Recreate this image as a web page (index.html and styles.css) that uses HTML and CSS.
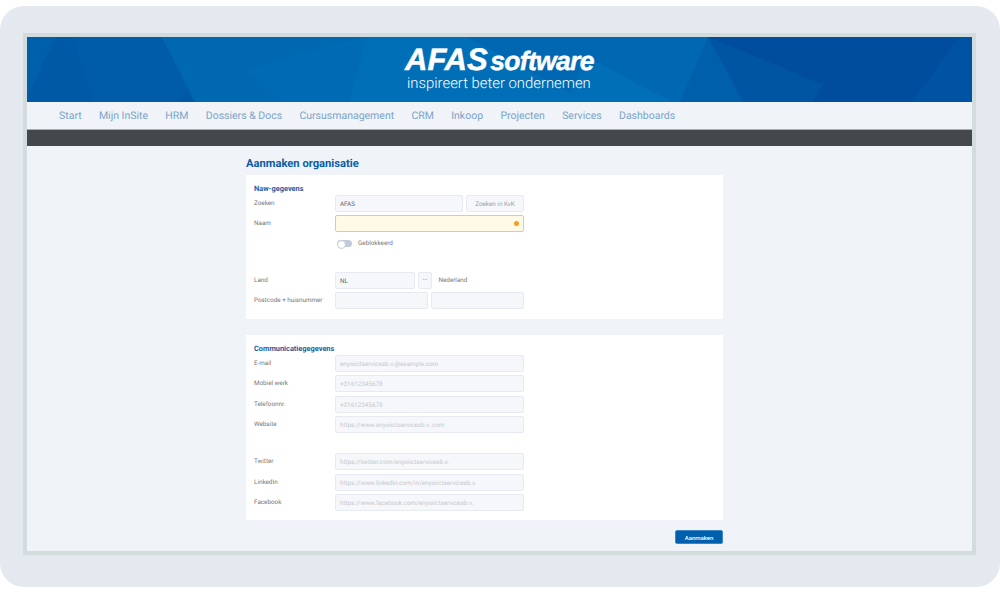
FILE: index.html
```html
<!DOCTYPE html>
<html lang="en">
<head>
  <meta charset="UTF-8" />
  <title>Aanmaken organisatie</title>
  <link rel="stylesheet" href="styles.css">
</head>
<body>
  <div class="frame">
    <div class="screen">
      <header class="banner">
        <svg class="facets" viewBox="0 0 945 65" preserveAspectRatio="none" aria-hidden="true">
          <polygon points="0,0 28,0 0,60" fill="#005fab"/>
          <polygon points="28,0 47,0 67,65 0,65 0,60" fill="#0059a5"/>
          <polygon points="47,0 135,0 168,65 67,65" fill="#005ca8"/>
          <polygon points="150,65 160,55 168,65" fill="#0057a5"/>
          <polygon points="135,0 340,0 322,65 168,65" fill="#0067b1"/>
          <polygon points="222,33 320,3 340,0 322,65 255,65" fill="#006bb5"/>
          <polygon points="340,0 590,0 590,65 322,65" fill="#006fb8"/>
          <polygon points="440,0 681,0 653,65 560,65" fill="#0068b2"/>
          <polygon points="560,20 645,65 540,65" fill="#006fb8"/>
          <polygon points="681,0 653,65 716,65" fill="#005fab"/>
          <polygon points="681,0 795,48 786,65 716,65" fill="#0055a3"/>
          <polygon points="681,0 945,0 945,65 786,65 795,48" fill="#004d9e"/>
          <polygon points="933,0 945,0 945,65 885,65" fill="#0053a3"/>
        </svg>
        <div class="logo">
          <div class="logo-name">AFAS <em>software</em></div>
          <div class="logo-tag">inspireert beter ondernemen</div>
        </div>
      </header>

      <nav class="menu">
        <a>Start</a>
        <a>Mijn InSite</a>
        <a>HRM</a>
        <a>Dossiers &amp; Docs</a>
        <a>Cursusmanagement</a>
        <a>CRM</a>
        <a>Inkoop</a>
        <a>Projecten</a>
        <a>Services</a>
        <a>Dashboards</a>
      </nav>
      <div class="toolbar"></div>

      <main class="content">
        <h1>Aanmaken organisatie</h1>

        <section class="card card-naw">
          <h2>Naw-gegevens</h2>
          <div class="row">
            <label>Zoeken</label>
            <div class="field grow">AFAS</div>
            <div class="field btn-kvk">Zoeken in KvK</div>
          </div>
          <div class="row">
            <label>Naam</label>
            <div class="field grow warn"><span class="warn-dot"></span></div>
          </div>
          <div class="row row-toggle">
            <span class="toggle"></span>
            <span class="toggle-text">Geblokkeerd</span>
          </div>
          <div class="row row-land">
            <label>Land</label>
            <div class="field land">NL</div>
            <div class="field dots">...</div>
            <span class="land-name">Nederland</span>
          </div>
          <div class="row">
            <label>Postcode + huisnummer</label>
            <div class="field grow"></div>
            <div class="field grow"></div>
          </div>
        </section>

        <section class="card card-comm">
          <h2>Communicatiegegevens</h2>
          <div class="row"><label>E-mail</label><div class="field grow hint">enyoiictservicesb.v.@example.com</div></div>
          <div class="row"><label>Mobiel werk</label><div class="field grow hint">+31612345678</div></div>
          <div class="row"><label>Telefoonnr.</label><div class="field grow hint">+31612345678</div></div>
          <div class="row"><label>Website</label><div class="field grow hint">https://www.enyoiictservicesb.v..com</div></div>
          <div class="row row-social"><label>Twitter</label><div class="field grow hint">https://twitter.com/enyoiictservicesb.v.</div></div>
          <div class="row"><label>LinkedIn</label><div class="field grow hint">https://www.linkedin.com/in/enyoiictservicesb.v.</div></div>
          <div class="row"><label>Facebook</label><div class="field grow hint">https://www.facebook.com/enyoiictservicesb.v.</div></div>
        </section>

        <div class="actions">
          <button class="btn-primary">Aanmaken</button>
        </div>
      </main>
    </div>
  </div>
</body>
</html>
```

FILE: styles.css
```css
* {
  box-sizing: border-box;
  margin: 0;
  padding: 0;
}

body {
  width: 1000px;
  height: 593px;
  padding-top: 6px;
  background: #fff;
  font-family: Roboto, sans-serif;
  text-rendering: geometricPrecision;
  overflow: hidden;
}

.frame {
  height: 581px;
  padding: 27px 23px 0;
  background: #e4e9f0;
  border-radius: 24px;
}

.screen {
  width: 953px;
  height: 522px;
  border: 4px solid #d3dcdc;
  background: #f0f4f8;
}

.banner {
  position: relative;
  height: 65px;
  background: #0068b3;
  overflow: hidden;
}

.facets {
  position: absolute;
  left: 0;
  top: 0;
  width: 100%;
  height: 100%;
}

.logo {
  position: relative;
  padding: 8px 0 0 378px;
  color: #fff;
}

.logo-name {
  font-family: "Liberation Sans", sans-serif;
  font-size: 31px;
  line-height: 30px;
  font-weight: 700;
  font-style: italic;
  -webkit-text-stroke: 0.5px #fff;
  white-space: nowrap;
}

.logo-name em {
  font-size: 26.5px;
  letter-spacing: -0.7px;
  margin-left: -6px;
}

.logo-tag {
  margin-top: -1px;
  padding-left: 2px;
  font-size: 14.85px;
  line-height: 17px;
  font-weight: 300;
  white-space: nowrap;
}

.menu {
  display: flex;
  align-items: center;
  gap: 17.3px;
  height: 28px;
  padding-left: 32px;
  background: #f0f4f8;
  border-bottom: 1px solid #a9adb1;
  font-size: 10.5px;
  color: #7ba3c9;
}

.toolbar {
  height: 16px;
  background: #44474c;
}

.content {
  width: 477px;
  margin-left: 219px;
}

h1 {
  height: 29px;
  padding-top: 11px;
  font-size: 11.2px;
  line-height: 14px;
  font-weight: 700;
  color: #0a5ca8;
}

.card {
  padding: 8px 0 0 8px;
  background: #fff;
}

.card-naw {
  height: 144px;
}

.card-comm {
  height: 185px;
  margin-top: 16px;
}

h2 {
  height: 12px;
  padding-top: 0.5px;
  font-size: 7.4px;
  line-height: 10px;
  font-weight: 700;
  color: #1d5ea4;
}

.row {
  display: flex;
  gap: 3px;
  width: 270px;
  height: 17px;
  margin-bottom: 3.4px;
  font-size: 6.3px;
}

.row label {
  flex: none;
  width: 75px;
  margin-right: 3px;
  padding-top: 4px;
  color: #777;
  white-space: nowrap;
}

.field {
  height: 17px;
  padding: 0 4px;
  background: #f5f7fa;
  border: 1px solid #e6ebf1;
  border-radius: 2px;
  line-height: 16px;
  color: #666;
  white-space: nowrap;
  overflow: hidden;
}

.grow {
  flex: 1;
  min-width: 0;
}

.hint {
  color: #c4c9ce;
}

.btn-kvk {
  flex: none;
  width: 58px;
  padding: 0;
  text-align: center;
  color: #9aa0a6;
}

.warn {
  position: relative;
  background: #fff9e8;
  border-color: #f4c778;
}

.warn-dot {
  position: absolute;
  right: 4px;
  top: 5px;
  width: 5px;
  height: 5px;
  border-radius: 50%;
  background: #f2a01e;
}

.row-toggle {
  align-items: center;
  height: 15px;
  margin-bottom: 0;
  padding-left: 83px;
  gap: 6px;
}

.toggle {
  position: relative;
  width: 15px;
  height: 7px;
  border-radius: 4px;
  background: #c3cad8;
}

.toggle::before {
  content: "";
  position: absolute;
  left: 0;
  top: 0;
  width: 7px;
  height: 7px;
  border-radius: 50%;
  background: #fff;
  border: 1px solid #c3cad8;
}

.toggle-text {
  color: #777;
}

.row-land {
  margin-top: 21px;
  align-items: flex-start;
}

.land {
  flex: none;
  width: 80px;
}

.dots {
  flex: none;
  width: 14px;
  padding: 0;
  text-align: center;
  line-height: 11px;
}

.land-name {
  margin-left: 3.5px;
  line-height: 17px;
  color: #777;
}

.row-social {
  margin-top: 20px;
}

.actions {
  display: flex;
  justify-content: flex-end;
  padding-top: 10px;
}

.btn-primary {
  width: 48px;
  height: 14px;
  background: #0060ad;
  border: 1px solid #3d86c3;
  border-radius: 2px;
  font-family: Roboto, sans-serif;
  font-size: 6px;
  font-weight: 500;
  color: #fff;
}
```
